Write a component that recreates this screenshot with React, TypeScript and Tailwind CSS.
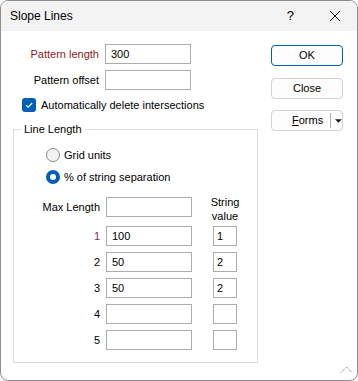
import React, { FC } from 'react';

const font = { fontFamily: '"Liberation Sans", Arial, sans-serif' };

const TextBox: FC<{ value?: string; className?: string }> = ({ value = '', className = '' }) => (
  <input
    readOnly
    value={value}
    className={`h-[20px] border border-[#acacac] bg-white text-[11px] text-black outline-none ${className}`}
  />
);

const Row: FC<{ label: string; labelClass?: string; value?: string; small?: string; className?: string }> = ({
  label,
  labelClass = 'text-black',
  value,
  small,
  className = '',
}) => (
  <div className={`flex items-center h-[20px] ${className}`}>
    <span className={`w-[86px] text-right ${labelClass}`}>{label}</span>
    <TextBox value={value} className="ml-[6px] w-[86px] pl-[5px]" />
    {small !== undefined && <TextBox value={small} className="ml-[21px] w-[24px] pl-[3px]" />}
  </div>
);

const Radio: FC<{ checked?: boolean; label: string; className?: string }> = ({ checked, label, className = '' }) => (
  <div className={`flex items-center h-[14px] ${className}`}>
    {checked ? (
      <span className="w-[14px] h-[14px] rounded-full bg-[#005fb8] flex items-center justify-center">
        <span className="w-[6px] h-[6px] rounded-full bg-white" />
      </span>
    ) : (
      <span className="w-[14px] h-[14px] rounded-full border border-[#8a8a8a] bg-[#f3f3f3]" />
    )}
    <span className="ml-[4px]">{label}</span>
  </div>
);

const Button: FC<{ primary?: boolean; className?: string; children: React.ReactNode }> = ({
  primary,
  className = '',
  children,
}) => (
  <div
    className={`w-[72px] h-[21px] rounded-[4px] border flex items-center justify-center bg-[#fdfdfd] ${
      primary ? 'border-[#005fb8]' : 'border-[#d2d2d2]'
    } ${className}`}
  >
    {children}
  </div>
);

const App: FC = () => {
  return (
    <div
      style={font}
      className="relative w-[358px] h-[381px] border border-[#8e8e8e] rounded-[8px] overflow-hidden flex flex-col bg-white text-[11px] text-black"
    >
      <div className="h-[30px] bg-[#f3f3f3] flex items-center pl-[9px] shrink-0">
        <span className="text-[12px]">Slope Lines</span>
        <span className="ml-auto text-[13px] mr-[35px]">?</span>
        <svg width="12" height="12" viewBox="0 0 12 12" className="mr-[16px]">
          <path d="M1 1 L11 11 M11 1 L1 11" stroke="#1a1a1a" strokeWidth="1" />
        </svg>
      </div>

      <div className="flex flex-1">
        <div className="w-[245px] ml-[12px] pt-[13px] flex flex-col">
          <Row label="Pattern length" labelClass="text-[#8c1c1c]" value="300" />
          <Row label="Pattern offset" className="mt-[6px]" />
          <div className="flex items-center mt-[8px] ml-[9px] h-[14px]">
            <span className="w-[14px] h-[14px] rounded-[3px] bg-[#005fb8] flex items-center justify-center">
              <svg width="10" height="10" viewBox="0 0 10 10">
                <path d="M2 5.2 L4.2 7.2 L8.2 3" fill="none" stroke="white" strokeWidth="1.1" />
              </svg>
            </span>
            <span className="ml-[5px]">Automatically delete intersections</span>
          </div>

          <div className="relative mt-[17px] h-[234px] border border-[#dcdcdc] flex flex-col pt-[18px]">
            <span className="absolute left-[7px] top-[-8px] px-[3px] bg-white leading-[14px]">Line Length</span>
            <Radio label="Grid units" className="ml-[32px]" />
            <Radio checked label="% of string separation" className="ml-[32px] mt-[8px]" />
            <div className="flex items-start mt-[11px]">
              <span className="w-[86px] text-right mt-[2px] h-[20px] leading-[20px]">Max Length</span>
              <TextBox className="ml-[6px] mt-[2px] w-[86px]" />
              <div className="ml-[21px] w-[24px] flex flex-col items-center leading-[14px] whitespace-nowrap">
                <span>String</span>
                <span>value</span>
              </div>
            </div>
            <Row label="1" labelClass="text-[#7a1f6e]" value="100" small="1" className="mt-[3px]" />
            <Row label="2" value="50" small="2" className="mt-[6px]" />
            <Row label="3" value="50" small="2" className="mt-[6px]" />
            <Row label="4" small="" className="mt-[6px]" />
            <Row label="5" small="" className="mt-[6px]" />
          </div>
        </div>

        <div className="ml-[13px] pt-[14px] flex flex-col">
          <Button primary>OK</Button>
          <Button className="mt-[12px]">Close</Button>
          <Button className="mt-[11px] justify-start">
            <span className="ml-[20px]">
              <span className="underline">F</span>orms
            </span>
            <span className="ml-[7px] w-px h-[15px] bg-[#b0b0b0]" />
            <svg width="8" height="4" viewBox="0 0 8 4" className="ml-[4px]">
              <path d="M0 0 L8 0 L4 4 Z" fill="#1a1a1a" />
            </svg>
          </Button>
        </div>
      </div>

      <svg width="13" height="7" viewBox="0 0 13 7" className="absolute right-[4px] bottom-[7px]">
        <path d="M1 6.5 L6.5 1 L12 6.5" fill="none" stroke="#6a6a6a" strokeWidth="1" strokeDasharray="1 1" />
      </svg>
    </div>
  );
};

export default App;
